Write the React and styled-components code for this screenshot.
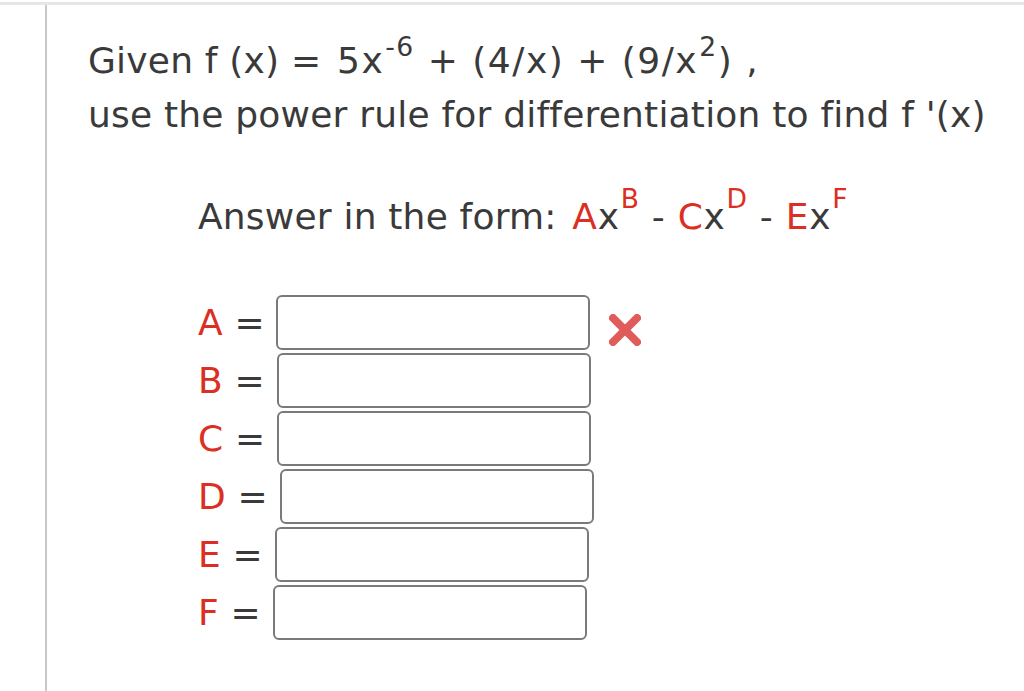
import React from "react";
import styled, { createGlobalStyle } from "styled-components";

const Global = createGlobalStyle`
  html, body { margin: 0; padding: 0; background: #fff; }
  body { font-family: "DejaVu Sans", Verdana, sans-serif; color: #3a3a3a; }
`;

const Page = styled.div`
  margin-top: 2px;
  border-top: 3px solid #e6e6e6;
  height: 686px;
  display: flex;
`;

const Panel = styled.div`
  margin-left: 45px;
  border-left: 2px solid #c8c8c8;
  padding: 29px 0 0 41px;
  flex: 1;
  font-size: 36px;
  letter-spacing: 0.2px;
`;

const Line = styled.div`
  line-height: 54px;
  white-space: nowrap;
`;

const Formula = styled.span`
  letter-spacing: ${(p) => p.$ls}px;
  margin-left: 4px;
`;

const Sup = styled.sup`
  font-size: 0.74em;
  vertical-align: ${(p) => p.$raise}px;
  line-height: 0;
  margin: 0 0 0 1px;
  color: ${(p) => (p.$red ? "#dc2f24" : "inherit")};
`;

const Red = styled.span`
  color: #dc2f24;
`;

const AnswerBlock = styled.div`
  margin-left: 110px;
  margin-top: 48px;
`;

const Rows = styled.div`
  margin-top: 51px;
  display: flex;
  flex-direction: column;
  gap: 3px;
`;

const Row = styled.div`
  display: flex;
  align-items: center;
  height: 55px;
  white-space: pre;
`;

const Label = styled.span`
  color: #dc2f24;
`;

const Input = styled.div`
  box-sizing: border-box;
  width: 314px;
  height: 55px;
  border: 2px solid #7a7a7a;
  border-radius: 6px;
  background: #fff;
`;

const Wrong = styled.svg`
  margin-left: 16px;
  width: 38px;
  height: 38px;
  margin-top: 14px;
  filter: blur(0.7px);
`;

const rows = [
  { l: "A", wrong: true },
  { l: "B" },
  { l: "C" },
  { l: "D" },
  { l: "E" },
  { l: "F" },
];

export default function App() {
  return (
    <>
      <Global />
      <Page>
        <Panel>
          <Line>
            {"Given f (x) = "}
            <Formula $ls={1.5}>
              5x<Sup $raise={17}>-6</Sup> + (4/x) + (9/x<Sup $raise={17}>2</Sup>) ,
            </Formula>
          </Line>
          <Line>use the power rule for differentiation to find f '(x)</Line>
          <AnswerBlock>
            <Line>
              {"Answer in the form: "}
              <Formula $ls={0.7}>
                <Red>A</Red>x<Sup $red $raise={21}>B</Sup> - <Red>C</Red>x
                <Sup $red $raise={21}>D</Sup> - <Red>E</Red>x<Sup $red $raise={21}>F</Sup>
              </Formula>
            </Line>
            <Rows>
              {rows.map((r) => (
                <Row key={r.l}>
                  <Label>{r.l}</Label>
                  {" = "}
                  <Input />
                  {r.wrong && (
                    <Wrong viewBox="0 0 38 38">
                      <g stroke="#e05c5a" strokeWidth="8" strokeLinecap="round">
                        <line x1="7" y1="7" x2="31" y2="31" />
                        <line x1="31" y1="7" x2="7" y2="31" />
                      </g>
                    </Wrong>
                  )}
                </Row>
              ))}
            </Rows>
          </AnswerBlock>
        </Panel>
      </Page>
    </>
  );
}
